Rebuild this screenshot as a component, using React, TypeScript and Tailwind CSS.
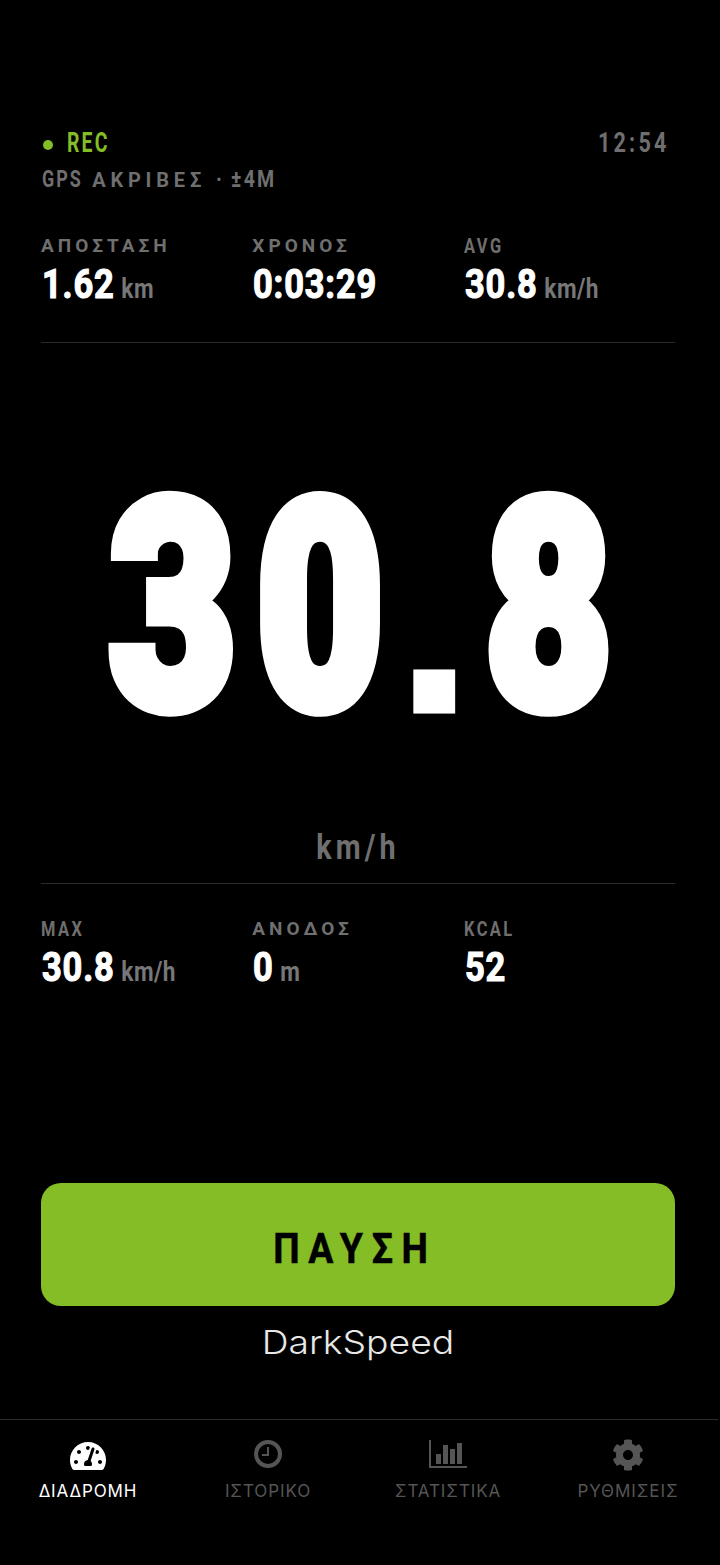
import { FaCog, FaTachometerAlt } from "react-icons/fa";

const narrow = "font-['Roboto','Liberation_Sans',sans-serif] font-bold";
const greek = "font-['Roboto','Liberation_Sans',sans-serif] font-bold";

type Stat = {
  label: string;
  value: string;
  unit?: string;
  latin?: boolean;
};

const topStats: Stat[] = [
  { label: "ΑΠΟΣΤΑΣΗ", value: "1.62", unit: "km" },
  { label: "ΧΡΟΝΟΣ", value: "0:03:29" },
  { label: "AVG", value: "30.8", unit: "km/h", latin: true },
];

const bottomStats: Stat[] = [
  { label: "MAX", value: "30.8", unit: "km/h", latin: true },
  { label: "ΑΝΟΔΟΣ", value: "0", unit: "m" },
  { label: "KCAL", value: "52", latin: true },
];

function StatGrid({ stats }: { stats: Stat[] }) {
  return (
    <div className="grid grid-cols-3">
      {stats.map((s) => (
        <div key={s.label}>
          <div
            className={
              s.latin
                ? `${narrow} origin-left scale-x-[.82] text-[20px] leading-[24px] tracking-[3px] text-[#6f6f6f]`
                : `${greek} text-[19px] leading-[24px] tracking-[4px] text-[#6f6f6f]`
            }
          >
            {s.label}
          </div>
          <div className={`${narrow} ml-[1px] mt-[2px] flex origin-left scale-x-[.84] items-baseline text-[41px] leading-[48px] tracking-[1px] text-white`}>
            <span className="[-webkit-text-stroke:1.2px_white]">{s.value}</span>
            {s.unit && (
              <span className="ml-2 text-[27px] tracking-[0.5px] text-[#777777]">{s.unit}</span>
            )}
          </div>
        </div>
      ))}
    </div>
  );
}

function ClockIcon() {
  return (
    <svg width="28" height="28" viewBox="0 0 28 28" fill="none" stroke="#555555" className="mb-[2px]">
      <circle cx="14" cy="14" r="12" strokeWidth="4" />
      <path d="M14 7v8H8" strokeWidth="2" />
    </svg>
  );
}

function ChartIcon() {
  return (
    <svg width="38" height="28" viewBox="0 0 38 28" fill="#555555" className="mb-[2px]">
      <path d="M0 0h2v26h36v2H0z" />
      <rect x="7" y="14" width="5" height="10" />
      <rect x="14" y="5" width="5" height="19" />
      <rect x="21" y="9" width="5" height="15" />
      <rect x="28" y="3" width="5" height="21" />
    </svg>
  );
}

const tabs = [
  { label: "ΔΙΑΔΡΟΜΗ", icon: <FaTachometerAlt size={36} color="#ffffff" className="mt-[2px]" />, active: true },
  { label: "ΙΣΤΟΡΙΚΟ", icon: <ClockIcon /> },
  { label: "ΣΤΑΤΙΣΤΙΚΑ", icon: <ChartIcon /> },
  { label: "ΡΥΘΜΙΣΕΙΣ", icon: <FaCog size={32} color="#555555" /> },
];

export default function App() {
  return (
    <div className="flex h-[1565px] w-[720px] flex-col overflow-hidden bg-black">
      <div className="flex flex-1 flex-col pl-[41px] pr-[45px]">
        {/* STATUS */}
        <div className="mt-[127px] flex h-[32px] items-center justify-between">
          <div className="flex items-center">
            <span className="ml-[2px] mt-[4px] h-[10px] w-[10px] rounded-full bg-[#84bd26]" />
            <span className={`${narrow} ml-[14px] origin-left scale-x-[.72] text-[27px] tracking-[3px] text-[#84bd26]`}>REC</span>
          </div>
          <div className={`${narrow} mr-[5px] origin-right scale-x-[.8] text-[27px] tracking-[4px] text-[#6f6f6f]`}>12:54</div>
        </div>
        <div className="mt-[7px] flex h-[28px] items-center text-[#6f6f6f]">
          <span className={`${narrow} ml-[1px] mr-[-2px] origin-left scale-x-[.78] text-[23px] tracking-[2.5px]`}>GPS</span>
          <span className={`${greek} text-[20px] tracking-[4.8px]`}>ΑΚΡΙΒΕΣ</span>
          <span className={`${narrow} ml-[10px] origin-left scale-x-[.85] text-[23px] tracking-[2.5px]`}>· ±4M</span>
        </div>

        <div className="mt-[40px]">
          <StatGrid stats={topStats} />
        </div>
        <div className="mt-[29px] h-px bg-[#2a2a2a]" />

        {/* BIG SPEED */}
        <div className="flex h-[485px] items-center justify-center pt-[42px]">
          <span className="ml-[24px] shrink-0 scale-x-[.76] whitespace-nowrap font-['Roboto',sans-serif] text-[290px] font-black leading-none tracking-[26px] text-white [-webkit-text-stroke:14px_white]">
            30<span className="inline-block origin-[50%_87%] scale-y-[.77] font-['Liberation_Sans',sans-serif] font-bold">.</span>8
          </span>
        </div>
        <div className={`${narrow} h-[55px] origin-center scale-x-[.82] text-center text-[35px] leading-[40px] tracking-[5px] text-[#6f6f6f]`}>
          km/h
        </div>
        <div className="h-px bg-[#2a2a2a]" />

        <div className="mt-[33px]">
          <StatGrid stats={bottomStats} />
        </div>

        {/* PAUSE */}
        <button className="mt-auto flex h-[123px] items-center justify-center rounded-[20px] bg-[#84bd26] pr-[6px] pt-[8px]">
          <span className={`${greek} scale-x-[.87] text-[43px] tracking-[10px] text-black [-webkit-text-stroke:0.5px_black]`}>ΠΑΥΣΗ</span>
        </button>
        <div className="mb-[56px] mt-[15px] h-[42px] scale-x-[1.13] text-center font-['Inter',sans-serif] text-[33px] font-light leading-[42px] text-[#e8e8e8]">
          DarkSpeed
        </div>
      </div>

      {/* TAB BAR */}
      <nav className="ml-[-2px] grid h-[146px] w-[720px] shrink-0 grid-cols-4 border-t border-[#2a2a2a] pt-[19px]">
        {tabs.map((t) => (
          <div key={t.label} className="flex flex-col items-center">
            <div className="flex h-[32px] items-center">{t.icon}</div>
            <span
              className={`mt-[10px] font-['Inter',sans-serif] text-[17px] leading-[20px] tracking-[0.9px] ${t.active ? "text-white" : "text-[#555555]"}`}
            >
              {t.label}
            </span>
          </div>
        ))}
      </nav>
    </div>
  );
}
